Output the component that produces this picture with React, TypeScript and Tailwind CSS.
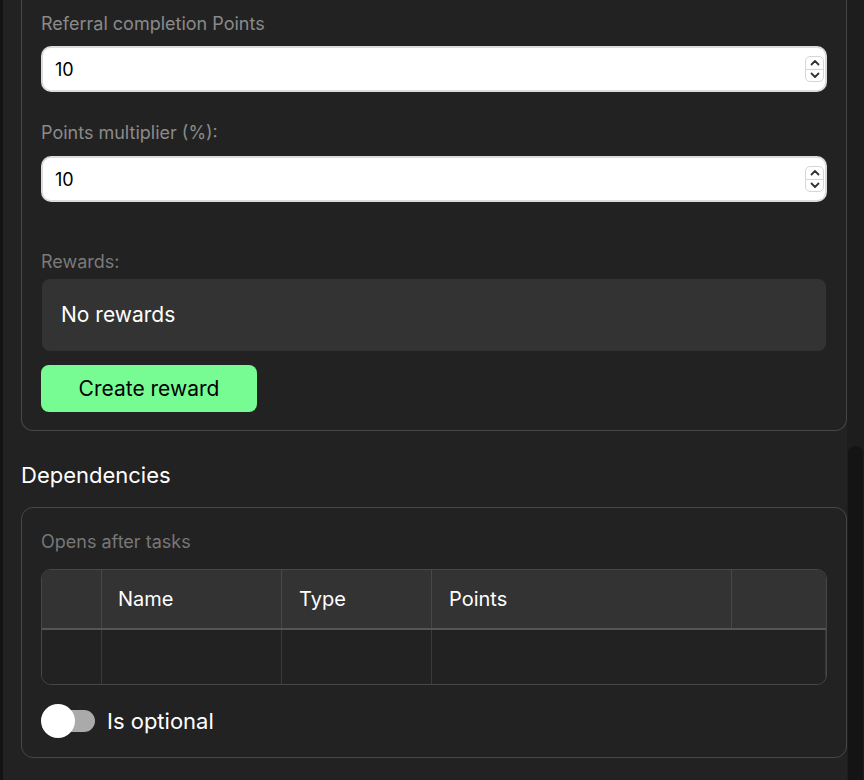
import { useState } from 'react';

const font = { fontFamily: 'Inter, "Noto Sans", sans-serif' };

function NumberField({ value }: { value: string }) {
  const [val, setVal] = useState(value);
  return (
    <div className="flex items-center h-[46px] bg-white rounded-[10px] border-2 border-[#dcdcdc] pl-3 pr-[1px]">
      <input
        type="text"
        value={val}
        onChange={e => setVal(e.target.value)}
        className="flex-1 bg-transparent text-black text-[18px] outline-none"
      />
      <div className="flex flex-col w-[19px] h-[26px] rounded-[5px] border border-[#d6d6d6] overflow-hidden">
        <div className="flex-1 flex items-center justify-center border-b border-[#d6d6d6]">
          <svg width="10" height="7" viewBox="0 0 10 7" fill="none">
            <path d="M1.5 5.5 5 2l3.5 3.5" stroke="#333" strokeWidth="1.8" strokeLinecap="round" strokeLinejoin="round" />
          </svg>
        </div>
        <div className="flex-1 flex items-center justify-center">
          <svg width="10" height="7" viewBox="0 0 10 7" fill="none">
            <path d="M1.5 1.5 5 5l3.5-3.5" stroke="#333" strokeWidth="1.8" strokeLinecap="round" strokeLinejoin="round" />
          </svg>
        </div>
      </div>
    </div>
  );
}

export default function App() {
  const [optional, setOptional] = useState(false);

  return (
    <div style={font} className="flex h-[780px] w-[864px] overflow-hidden bg-[#222222]">
      {/* Main scroll area */}
      <div className="w-[847px] border-l-[3px] border-[#131313] pl-[18px]">
        {/* Rewards card (top cut off) */}
        <div className="border-x border-b border-[#474747] rounded-b-xl px-[19px] pb-[18px]">
          <label className="block pt-[10px] text-[18px] leading-[28px] text-[#8a8a8a]">Referral completion Points</label>
          <div className="mt-[8px]">
            <NumberField value="10" />
          </div>

          <label className="block mt-[27px] text-[18px] leading-[28px] text-[#8a8a8a]">Points multiplier (%):</label>
          <div className="mt-[9px]">
            <NumberField value="10" />
          </div>

          <label className="block mt-[46px] text-[18px] leading-[28px] text-[#7a7a7a]">Rewards:</label>
          <div className="mt-[3px] mx-px h-[72px] rounded-lg bg-[#333333] flex items-center px-[19px]">
            <span className="text-white text-[21px]">No rewards</span>
          </div>
          <button className="mt-[14px] h-[47px] w-[216px] rounded-lg bg-[#77fc93] text-black text-[21px] flex items-center justify-center">
            Create reward
          </button>
        </div>

        <h2 className="mt-[29px] text-white text-[22px] leading-[30px]">Dependencies</h2>

        {/* Dependencies card */}
        <div className="mt-[17px] border border-[#474747] rounded-xl px-[19px] pt-[20px] pb-[19px]">
          <label className="block text-[18px] leading-[28px] text-[#777777]">Opens after tasks</label>
          <div className="mt-[13px] rounded-[10px] border border-[#474747] overflow-hidden">
            <div className="flex h-[60px] bg-[#333333] border-b-2 border-[#555555] text-white text-[20px]">
              <div className="w-[60px] border-r border-[#474747]" />
              <div className="w-[180px] border-r border-[#474747] flex items-center pl-[16px]">Name</div>
              <div className="w-[150px] border-r border-[#474747] flex items-center pl-[17px]">Type</div>
              <div className="w-[300px] border-r border-[#474747] flex items-center pl-[17px]">Points</div>
              <div className="flex-1" />
            </div>
            <div className="flex h-[54px] bg-[#222222]">
              <div className="w-[60px] border-r border-[#3a3a3a]" />
              <div className="w-[180px] border-r border-[#3a3a3a]" />
              <div className="w-[150px] border-r border-[#3a3a3a]" />
              <div className="w-[300px]" />
              <div className="flex-1 border-r border-[#3a3a3a]" />
            </div>
          </div>

          <div className="mt-[19px] flex items-center gap-[12px]">
            <button onClick={() => setOptional(!optional)} className="relative w-[54px] h-[34px] flex items-center">
              <div className={`ml-[4px] h-[22px] w-[50px] rounded-full ${optional ? 'bg-[#77fc93]' : 'bg-[#aaaaaa]'}`} />
              <div className={`absolute top-0 h-[34px] w-[34px] rounded-full bg-white ${optional ? 'left-[20px]' : 'left-0'}`} />
            </button>
            <span className="text-white text-[22px]">Is optional</span>
          </div>
        </div>
      </div>

      {/* Scrollbar */}
      <div className="w-[17px] bg-[#1d1d1d] pt-[446px] px-px">
        <div className="h-[334px] rounded-t-lg bg-[#141414]" />
      </div>
    </div>
  );
}
